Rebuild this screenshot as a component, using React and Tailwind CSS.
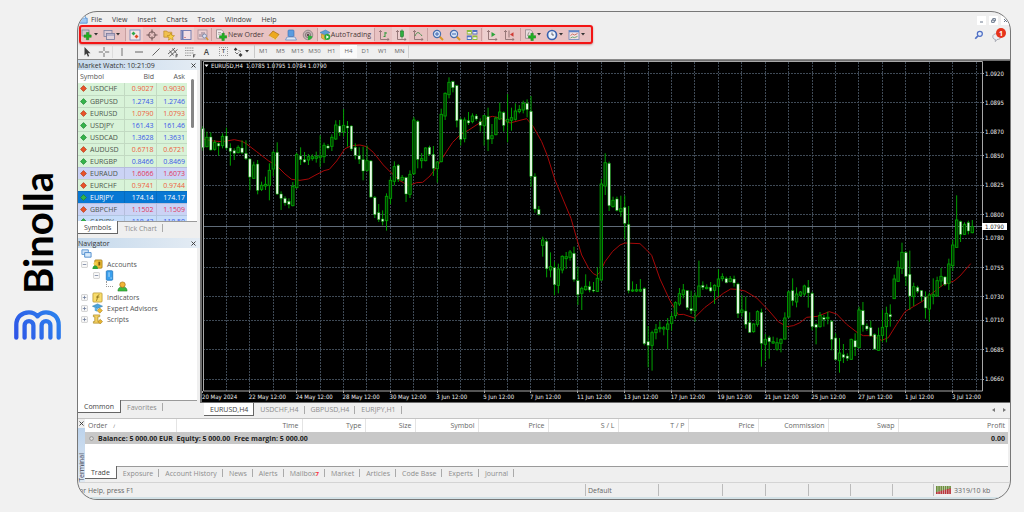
import React from 'react';
import clsx from 'clsx';

// ---------- Chart data ----------
// [kind, body top, body bottom, high, low] in thirds of a pixel; w = bearish, g = bullish
const CANDLES = `
w 206 263 198 272|g 232 260 215 262|w 231 270 217 272|g 247 268 240 272|w 250 258 247 287|g 229 257 220 265
w 228 264 203 270|w 264 274 250 317|w 272 280 265 300|g 262 278 256 280|w 264 278 241 282|w 280 296 241 300
w 297 351 295 391|g 315 355 305 357|w 312 391 300 403|g 376 388 365 393|g 373 378 350 390|g 331 376 310 421
g 278 327 272 348|w 277 402 247 405|w 402 415 394 450|w 415 429 409 437|w 424 433 415 445|g 379 437 366 439
g 284 383 278 385|w 288 299 262 315|w 299 306 276 309|g 290 300 282 315|g 290 296 283 302|g 290 295 275 308
g 288 292 226 321|g 256 290 248 309|w 258 264 252 268|g 232 259 223 273|g 195 237 181 240|w 198 217 180 228
g 196 215 147 230|w 198 204 183 260|w 198 267 196 273|w 262 286 250 298|w 287 298 262 312|w 299 333 260 361
g 302 331 257 335|w 303 411 300 414|w 413 464 408 474|w 458 479 432 486|w 477 484 451 496|g 409 482 400 512
g 361 415 352 433|g 320 364 304 376|w 316 358 312 366|g 352 360 345 364|w 353 402 350 426|g 343 403 331 414
g 180 341 171 345|w 184 298 180 325|g 296 302 279 325|g 264 302 262 304|w 262 283 257 287|w 283 325 258 348
g 306 326 305 368|g 163 305 146 307|g 100 168 97 180|g 67 104 52 115|w 65 83 62 97|w 77 182 74 202
w 178 238 173 257|g 180 236 172 247|w 182 189 156 195|g 168 185 160 190|w 168 177 162 182|w 185 196 175 215
g 167 197 165 257|w 170 239 143 273|g 227 236 192 252|g 174 224 170 226|g 156 177 128 180|w 158 196 154 215
g 178 186 102 247|g 173 181 143 212|g 153 178 130 182|g 148 155 135 160|g 130 150 122 160|w 130 149 118 172
w 154 349 108 380|w 350 447 340 458|w 449 463 438 466|g 540 556 530 590|w 544 626 538 652|g 620 630 577 652
w 623 674 605 706|g 627 676 611 700|g 589 630 586 640|g 590 596 576 627|g 576 592 570 602|w 580 659 560 665
w 662 704 620 735|g 685 700 680 750|g 679 689 643 692|w 680 690 664 697|w 690 693 666 697|g 655 694 622 696
g 372 660 356 662|g 308 378 280 405|w 310 437 305 453|g 421 440 410 443|w 417 451 410 454|g 446 455 407 470
w 442 490 407 538|w 493 692 438 700|g 690 693 664 696|g 689 693 672 696|g 689 693 657 696|w 686 851 682 856
w 845 856 798 922|g 818 856 812 932|g 808 818 792 838|g 802 806 784 817|g 803 807 798 826|g 792 808 774 868
g 770 790 758 812|g 728 767 724 776|g 701 732 684 738|g 690 704 672 715|w 692 743 690 750|w 746 752 692 762
g 708 752 697 785|g 678 710 602 712|w 676 682 664 690|g 682 686 673 688|w 682 693 666 697|g 676 691 673 732
g 657 679 628 710|g 650 656 640 664|w 656 668 650 670|g 656 665 648 667|w 657 669 647 680|w 672 761 668 774
g 750 757 705 770|w 753 793 710 806|w 788 817 757 819|g 792 815 790 818|g 755 793 751 800|w 757 850 746 920
g 838 853 822 903|w 833 845 827 896|g 845 849 830 852|g 848 868 833 872|g 838 850 835 877|g 774 837 757 839
g 696 771 692 773|w 692 722 655 737|g 702 726 682 742|g 696 706 693 710|g 678 702 674 708|w 682 699 660 743
w 700 800 695 811|w 794 802 790 853|g 766 800 756 803|w 773 778 765 800|g 772 776 755 793|w 784 838 780 871
w 834 899 820 901|g 879 902 834 938|w 884 892 852 909|w 888 895 880 903|g 838 898 836 900|w 842 861 820 888
g 750 863 740 865|w 752 795 726 815|w 798 807 790 813|w 803 828 782 830|w 824 867 820 870|g 827 871 803 872
g 802 826 750 846|g 760 800 740 847|w 764 770 733 800|g 657 716 644 717|g 623 664 602 666|g 577 625 548 642
w 578 649 574 678|w 643 708 572 750|g 680 710 668 738|w 682 694 677 700|w 692 710 690 724|w 711 744 694 776
g 705 747 698 785|g 704 709 655 733|g 662 708 650 710|g 649 663 624 680|w 651 673 648 678|g 612 670 596 690
g 555 617 540 633|g 480 562 406 564|w 485 523 482 546|g 493 523 487 525|w 488 513 482 523|g 500 518 480 520`
  .trim()
  .split(/[|\n]/)
  .map((row) => {
    const [kind, ...v] = row.trim().split(' ');
    const [top, bottom, high, low] = v.map((n) => Number(n) / 3);
    return { kind, top, bottom, high, low };
  });

const AVERAGE =
  '9,237 40,243 67,245 103,239 126,244 140,252 170,275 205,302 231,318 255,342 275,358 300,361 325,357 345,346 372,332 388,328 410,303 435,266 455,257 480,255 500,260 520,277 550,315 571,336 600,362 625,377 650,368 668,367 690,348 715,314 740,274 758,247 781,224 805,211 840,188 863,173 877,169 900,174 930,189 960,181 980,176 1000,200 1025,245 1042,287 1065,360 1090,420 1113,475 1130,535 1145,585 1165,623 1180,641 1190,646 1200,637 1215,605 1238,574 1260,555 1275,549 1320,551 1340,570 1355,586 1380,657 1410,722 1435,764 1450,763 1483,774 1515,742 1542,722 1570,700 1592,687 1610,688 1635,693 1670,714 1705,750 1735,785 1760,800 1780,797 1800,788 1820,772 1852,769 1888,755 1910,762 1940,793 1975,820 1990,827 2015,827 2045,841 2065,833 2090,793 2115,755 2140,740 2170,722 2200,697 2230,674 2262,663 2280,648 2312,611';

const PRICES = [
  10920, 10895, 10870, 10850, 10825, 10800, 10780, 10755, 10730, 10710, 10685,
  10660
];
const DATES = [
  '20 May 2024', '22 May 12:00', '24 May 12:00', '28 May 12:00',
  '30 May 12:00', '3 Jun 12:00', '5 Jun 12:00', '7 Jun 12:00',
  '11 Jun 12:00', '13 Jun 12:00', '17 Jun 12:00', '19 Jun 12:00',
  '21 Jun 12:00', '25 Jun 12:00', '27 Jun 12:00', '1 Jul 12:00',
  '3 Jul 12:00'
];
const priceY = (p) => 13.5 + (10920 - p) * 1.176;

const SYMBOLS = [
  ['USDCHF', '0.9027', '0.9030', 'down'],
  ['GBPUSD', '1.2743', '1.2746', 'up'],
  ['EURUSD', '1.0790', '1.0793', 'down'],
  ['USDJPY', '161.43', '161.46', 'up'],
  ['USDCAD', '1.3628', '1.3631', 'up'],
  ['AUDUSD', '0.6718', '0.6721', 'down'],
  ['EURGBP', '0.8466', '0.8469', 'up'],
  ['EURAUD', '1.6066', '1.6073', 'down', 'blue'],
  ['EURCHF', '0.9741', '0.9744', 'down'],
  ['EURJPY', '174.14', '174.17', 'up', 'selected'],
  ['GBPCHF', '1.1502', '1.1509', 'down', 'blue'],
  ['CADJPY', '118.43', '118.50', 'up', 'sky']
];

const ROW_BG = {
  green: 'bg-[#d8f3d8]',
  blue: 'bg-[#cbd3f5]',
  sky: 'bg-[#c6dcfa]',
  selected: 'bg-[#0878d4]'
};

const COLUMNS = [
  ['Time', 'w-[126px]'],
  ['Type', 'w-[63px]'],
  ['Size', 'w-[50px]'],
  ['Symbol', 'w-[63px]'],
  ['Price', 'w-[70px]'],
  ['S / L', 'w-[70px]'],
  ['T / P', 'w-[70px]'],
  ['Price', 'w-[70px]'],
  ['Commission', 'w-[70px]'],
  ['Swap', 'w-[70px]'],
  ['Profit', '']
];

// ---------- Icons ----------
const Icon = ({ children, className = 'size-3' }) => (
  <svg
    viewBox="0 0 12 12"
    className={clsx('block shrink-0', className)}
    fill="none"
    aria-hidden="true"
  >
    {children}
  </svg>
);

const Plus = ({ x = 0, y = 0 }) => (
  <path
    transform={`translate(${x} ${y})`}
    d="M2.4 0h2.4v2.4h2.4v2.4H4.8v2.4H2.4V4.8H0V2.4h2.4z"
    fill="#22b022"
    stroke="#14801a"
    strokeWidth=".5"
  />
);
const Axes = () => (
  <path d="M2.5 1.5v9H11M1 3l1.500-1.500L4 3M9.500 9l1.500 1.500-1.500 1" stroke="#8f6f70" strokeWidth=".9" />
);
const Lens = ({ minus }) => (
  <>
    <path d="m7.500 7.500 3.500 3.500" stroke="#d8962a" strokeWidth="2" />
    <circle cx="5" cy="5" r="3.600" fill="#d6e4f8" stroke="#4a6fae" strokeWidth="1.200" />
    <path d={minus ? 'M3 5h4' : 'M3 5h4M5 3v4'} stroke="#3f66b0" strokeWidth="1" />
  </>
);

const ICONS = {
  newChart: (
    <>
      <rect x="1" y="1" width="7" height="6" fill="#d3c6cb" stroke="#6d7c93" strokeWidth=".7" />
      <Plus x={3} y={3.5} />
    </>
  ),
  profiles: (
    <>
      <rect x="1" y="1.500" width="8" height="6" fill="#dcc8d2" stroke="#7b7fa0" strokeWidth=".8" />
      <rect x="3.500" y="4.500" width="8" height="6" fill="#e3d0d8" stroke="#74789c" strokeWidth=".8" />
      <path d="M4 6h7" stroke="#8a90bc" />
    </>
  ),
  market: (
    <>
      <rect x="1" y="1" width="10" height="10" fill="#f4e6e8" stroke="#7d8fc0" strokeWidth=".9" />
      <path d="m4.500 2.500 2 2-2 2-2-2z" fill="#2ca84a" />
      <path d="m7.500 5.500 2 2-2 2-2-2z" fill="#e04a20" />
    </>
  ),
  target: (
    <>
      <circle cx="6" cy="6" r="3.300" stroke="#75595a" strokeWidth="1" />
      <path d="M6 .5v4M6 7.500v4M.5 6h4M7.500 6h4" stroke="#75595a" strokeWidth="1.100" />
    </>
  ),
  navigator: (
    <>
      <path d="M.8 2h3l1 1.200h4v5h-8z" fill="#f0c050" stroke="#b58020" strokeWidth=".6" />
      <path d="m7.800 4 1.100 2.400 2.600.3-1.900 1.800.5 2.600-2.300-1.300-2.300 1.300.5-2.600-1.900-1.800 2.600-.3z" fill="#f6cf45" stroke="#b98518" strokeWidth=".6" />
    </>
  ),
  terminal: (
    <>
      <rect x="1" y="1.500" width="10" height="9" fill="#f2dfe4" stroke="#6b78b0" strokeWidth=".9" />
      <path d="M1.500 2h2v8h-2z" fill="#6b78b0" />
      <path d="M4.500 8.500h1" stroke="#c03030" />
    </>
  ),
  tester: (
    <>
      <rect x="1" y="1" width="9" height="9" fill="#ecd0d2" stroke="#a98f98" strokeWidth=".8" />
      <path d="M3 8V5M5 8V3M7 6V3" stroke="#8d7c90" />
      <circle cx="7.500" cy="7" r="2" fill="#d8e0f2" stroke="#7580a0" strokeWidth=".8" />
      <path d="m9 8.500 2.200 2.500" stroke="#d49430" strokeWidth="1.400" />
    </>
  ),
  order: (
    <>
      <path d="M1.500.8h5l2 2v6.500h-7z" fill="#f1ecec" stroke="#8a7a7c" strokeWidth=".7" />
      <path d="M3 3.500h3M3 5.200h3" stroke="#a09092" strokeWidth=".7" />
      <Plus x={4.5} y={4.3} />
    </>
  ),
  editor: (
    <>
      <path d="M1 6.500 5 2l6 3.500-3.500 5z" fill="#eda91f" stroke="#a86a10" strokeWidth=".7" />
      <path d="m1.200 7 6.300 3.700L11 6.400" stroke="#fbe3a0" strokeWidth=".8" />
    </>
  ),
  community: (
    <>
      <path d="M2 8h8l1.500 3h-11z" fill="#dfe6f2" stroke="#5f86c4" strokeWidth=".7" />
      <rect x="3" y="1" width="6" height="6.500" rx="1" fill="#5a9be0" stroke="#3a6bb0" strokeWidth=".6" />
    </>
  ),
  signals: (
    <>
      <circle cx="6" cy="6" r="4.800" fill="#c4b2b4" stroke="#8f8082" strokeWidth=".8" />
      <circle cx="6" cy="6" r="2.600" stroke="#7b6b6e" strokeWidth=".8" />
      <path d="M6 6v5c2 0 4-1.500 4.500-3.500z" fill="#2eae3c" />
      <circle cx="6" cy="6" r="1.200" fill="#5d4d50" />
    </>
  ),
  auto: (
    <>
      <path d="M1 3.500 6.500 1 11 3.500 6 6z" fill="#5f9fd6" stroke="#3a70a8" strokeWidth=".5" />
      <path d="M2.500 5v4L6 11l3-1.500V5L6 6.500z" fill="#e9b640" stroke="#a77818" strokeWidth=".5" />
      <circle cx="8.300" cy="8" r="3" fill="#27a838" />
      <path d="m7.300 6.300 2.700 1.700-2.700 1.700z" fill="#fff" />
    </>
  ),
  bars: (
    <>
      <Axes />
      <path d="M7 3v5M7 4h2M5.500 7.500H7" stroke="#2e9a3a" strokeWidth="1" />
    </>
  ),
  candles: (
    <>
      <Axes />
      <path d="M7 .5v9" stroke="#1d7d2b" strokeWidth=".8" />
      <rect x="5.500" y="2" width="3" height="5.500" fill="#2fae3e" stroke="#1d7d2b" strokeWidth=".6" />
    </>
  ),
  line: (
    <>
      <Axes />
      <path d="M3 7c2-5 4-4 7 0" stroke="#3d8a45" strokeWidth=".9" />
    </>
  ),
  zoomIn: <Lens />,
  zoomOut: <Lens minus />,
  tile: (
    <>
      <path d="M.8 1h5v4.600h-5zM6.400 6.400h5V11h-5z" fill="#8dbb3a" />
      <path d="M6.400 1h5v4.600h-5zM.8 6.400h5V11h-5z" fill="#4d6fc0" />
      <path d="M1.600 3h3.400v1.600H1.600zM7.200 3h3.400v1.600H7.200zM1.600 8.300h3.400v1.600H1.600zM7.200 8.300h3.400v1.600H7.200z" fill="#f1eef2" />
    </>
  ),
  scroll: (
    <>
      <Axes />
      <path d="m5.500 3 4 2.500-4 2.500z" fill="#2fa53c" />
    </>
  ),
  shift: (
    <>
      <Axes />
      <path d="M6 1.500v7" stroke="#7d5f60" strokeWidth=".8" />
      <path d="m10.500 3.200-3.500 2.300 3.500 2.300z" fill="#d03a34" />
    </>
  ),
  indicators: (
    <>
      <path d="M1.500.8h5l2 2v6.500h-7z" fill="#e9dcde" stroke="#8a7a7c" strokeWidth=".7" />
      <path d="M3.200 7c1 0 .8-4 2.300-4" stroke="#776" strokeWidth=".7" />
      <Plus x={4.5} y={4.3} />
    </>
  ),
  clock: (
    <>
      <circle cx="6" cy="6" r="4.500" fill="#eef3fb" stroke="#3b62ae" strokeWidth="1.700" />
      <path d="M6 3.500V6h2" stroke="#445" strokeWidth=".8" />
    </>
  ),
  template: (
    <>
      <rect x="1" y="1.500" width="10" height="9" fill="#f1dfe1" stroke="#6b86bd" strokeWidth=".8" />
      <path d="M1 2.500h10" stroke="#5c82c8" strokeWidth="1.600" />
      <path d="m2.500 6.500 2-1.500 2 1 3-1.500" stroke="#c25a4a" strokeWidth=".8" />
      <path d="m2.500 9 2-1 2 .6 3-1.200" stroke="#4d9a58" strokeWidth=".8" />
    </>
  ),
  cursor: <path d="M3.500 1v8.500l2-2 1.400 3.200 1.300-.6L6.900 7.200h2.600z" fill="#3c3c3c" />,
  cross: <path d="M6 1v4M6 7v4M.8 6h4.200M7 6h4.200" stroke="#666" strokeWidth=".9" />,
  vline: <path d="M6 2v8" stroke="#666" strokeWidth=".9" />,
  hline: <path d="M2 6h8" stroke="#555" strokeWidth=".9" />,
  trend: <path d="m2.500 9.500 7-7" stroke="#555" strokeWidth=".9" />,
  channel: (
    <>
      <path d="m1 8 7-6M2.500 10.500l8-7M2.500 4.500l4 5M5.500 2.500l4 5" stroke="#555" strokeWidth=".9" />
      <path d="M9 8.500v3M9 8.700h2M9 10h1.600" stroke="#333" strokeWidth=".7" />
    </>
  ),
  fibo: (
    <>
      <path d="M1 2h9M1 4.500h9M1 7h9M1 9.500h6" stroke="#888" strokeWidth=".8" strokeDasharray="1.200 .5" />
      <path d="M9.500 8.500v3M9.500 8.700h2M9.500 10h1.500" stroke="#333" strokeWidth=".7" />
    </>
  ),
  shapes: (
    <>
      <path d="m3.500 1.500 2 2-2 1.500-1.700-1.500z" fill="#3b3b3b" />
      <path d="m8.500 7 2 2-2 2-2-2z" fill="#3b3b3b" />
      <path d="m3 6 2 2 1.500-1.500M6.500 4.500 9 5.500" stroke="#555" strokeWidth=".8" />
    </>
  )
};

const ToolButton = ({ name, menu, pressed }) => (
  <button
    type="button"
    aria-label={name}
    className={clsx(
      'flex h-[15px] items-center',
      menu ? 'w-[22px] gap-px' : 'w-[17px] justify-center',
      pressed && 'bg-white/20'
    )}
  >
    <Icon>{ICONS[name]}</Icon>
    {menu && <Caret />}
  </button>
);

const Caret = () => (
  <svg viewBox="0 0 4 3" className="block h-[3px] w-[4px] shrink-0" aria-hidden="true">
    <path d="M0 0h4L2 2.500z" fill="#333" />
  </svg>
);

const Divider = ({ className = 'bg-[#c89fa0]' }) => (
  <span className={clsx('h-[13px] w-px shrink-0', className)} />
);

const CloseMark = () => (
  <svg viewBox="0 0 5 5" className="block size-[5px]" aria-hidden="true">
    <path d="m.5.5 4 4m0-4-4 4" stroke="#333" strokeWidth=".9" />
  </svg>
);

// ---------- Top area ----------
const MenuBar = () => (
  <div className="flex h-[14px] items-center justify-between">
    <nav className="flex items-center gap-[10px]">
      <Icon className="-mr-[7px] size-[10px]">
        <path d="M1 5h10v6H1z" fill="#9fc8f2" stroke="#4d8bd0" />
        <path d="M3 5V2l3-1.500L9 3v2" fill="#d4e8fb" stroke="#5d97d6" />
      </Icon>
      {['File', 'View', 'Insert', 'Charts', 'Tools', 'Window', 'Help'].map((m) => (
        <button key={m} type="button" className="text-[#3c3c3c]">
          {m}
        </button>
      ))}
    </nav>
    <div className="flex gap-[3px] pt-[2px]">
      {[
        ['Minimize', 'M4 8h4'],
        ['Restore', 'M3.500 5.500h3.500v3H3.500zM5 5.500v-2h3.500v3H7'],
        ['Close', 'm4 4 4 4m0-4-4 4']
      ].map(([label, d]) => (
        <button key={label} type="button" aria-label={label} className="bg-white">
          <Icon className="size-[9px]">
            <path d={d} stroke="#5a6a80" strokeWidth="1.200" />
          </Icon>
        </button>
      ))}
    </div>
  </div>
);

const MainToolbar = () => (
  <div className="flex items-center justify-between pr-1">
    <div className="-mt-px ml-px flex h-[19px] items-center rounded-[3px] border-2 border-[#f31414] bg-[#e8c2c2] pr-px shadow-[0_1px_2px_rgba(160,60,60,0.5)]">
      <ToolButton name="newChart" menu />
      <ToolButton name="profiles" menu />
      <Divider />
      <ToolButton name="market" pressed />
      <ToolButton name="target" />
      <ToolButton name="navigator" pressed />
      <ToolButton name="terminal" pressed />
      <ToolButton name="tester" />
      <Divider />
      <button type="button" className="flex items-center gap-px pl-[3px] pr-[2px] text-[#4a3838]">
        <Icon>{ICONS.order}</Icon>
        New Order
      </button>
      <ToolButton name="editor" />
      <ToolButton name="community" />
      <ToolButton name="signals" />
      <Divider />
      <button type="button" className="flex h-[15px] items-center bg-white/20 pl-px pr-[3px] text-[#4a3838]">
        <Icon>{ICONS.auto}</Icon>
        AutoTrading
      </button>
      <Divider />
      <ToolButton name="bars" />
      <ToolButton name="candles" pressed />
      <ToolButton name="line" />
      <Divider className="mx-px bg-[#c89fa0]" />
      <ToolButton name="zoomIn" />
      <ToolButton name="zoomOut" />
      <ToolButton name="tile" />
      <Divider className="mx-px bg-[#c89fa0]" />
      <ToolButton name="scroll" pressed />
      <ToolButton name="shift" />
      <Divider className="mx-[3px] bg-[#c89fa0]" />
      <ToolButton name="indicators" menu />
      <ToolButton name="clock" menu />
      <ToolButton name="template" menu />
    </div>
    <div className="flex items-center gap-2">
      <button type="button" aria-label="Search">
        <Icon className="size-[10px]">
          <circle cx="7" cy="4.500" r="3" fill="#e6eefc" stroke="#4f6fc4" strokeWidth="1.500" />
          <path d="M4.700 7 1.500 10.500" stroke="#4f6fc4" strokeWidth="2" />
        </Icon>
      </button>
      <button type="button" className="relative h-[14px] w-[14px]" aria-label="Notifications">
        <Icon className="mt-1 size-[10px]">
          <path d="M1 5.500C1 3 3 2 6 2s5 1.500 5 3.500S9 9 6 9l-2 2.500V9C2 8.500 1 7.500 1 5.500z" fill="#eceef2" stroke="#9a9ea8" />
        </Icon>
        <span className="absolute right-0 top-0 flex size-[10px] items-center justify-center rounded-full bg-[#e5321b] font-bold text-white">
          1
        </span>
      </button>
    </div>
  </div>
);

const DrawingToolbar = () => (
  <div className="flex h-[15px] items-center text-[6px] text-[#666]">
    <ToolButton name="cursor" />
    <ToolButton name="cross" />
    <Divider className="bg-[#dcdcdc]" />
    <ToolButton name="vline" />
    <ToolButton name="hline" />
    <ToolButton name="trend" />
    <ToolButton name="channel" />
    <ToolButton name="fibo" />
    <button type="button" className="w-[17px] text-[8px] font-semibold text-[#444]">
      A
    </button>
    <button type="button" className="flex w-[17px] justify-center">
      <span className="border border-dotted border-[#999] px-[2px] font-semibold leading-[7px] text-[#444]">
        T
      </span>
    </button>
    <ToolButton name="shapes" menu />
    <Divider className="bg-[#c9c9c9]" />
    {['M1', 'M5', 'M15', 'M30', 'H1', 'H4', 'D1', 'W1', 'MN'].map((t) => (
      <button
        key={t}
        type="button"
        className={clsx('h-[13px] w-[17px]', t === 'H4' && 'bg-[#fafafa]')}
      >
        {t}
      </button>
    ))}
    <Divider className="bg-[#d0d0d0]" />
  </div>
);

// ---------- Left side ----------
const PanelTitle = ({ children }) => (
  <div className="flex h-[10px] items-center justify-between bg-linear-to-r from-[#c5d9ec] to-[#e4ecf4] pr-1 text-[#333]">
    <h2>{children}</h2>
    <button type="button" aria-label="Close panel">
      <CloseMark />
    </button>
  </div>
);

const Tabs = ({ items, label }) => (
  <div role="tablist" aria-label={label} className="flex h-[13px] text-[#8d8d8d]">
    {items.map((item, i) => (
      <button
        key={item}
        type="button"
        role="tab"
        aria-selected={i === 0}
        className={clsx(
          'flex items-center whitespace-nowrap pl-[6px]',
          i === 0
            ? 'border-b border-r border-[#666] bg-white pr-[6px] text-[#444]'
            : 'border-t border-[#9a9a9a]'
        )}
      >
        {item}
        {item === 'Mailbox' && (
          <span className="self-end text-[6px] font-bold leading-[9px] text-red-500">7</span>
        )}
        {i > 0 && <span className="ml-[5px] h-2 w-px bg-[#aaa]" />}
      </button>
    ))}
    <span className="flex-1 border-t border-[#9a9a9a]" />
  </div>
);

const MarketWatch = () => (
  <section>
    <PanelTitle>Market Watch: 10:21:09</PanelTitle>
    <div className="mr-[3px] flex h-[151px] overflow-hidden bg-white">
      <table className="h-[158px] w-[109px] table-fixed border-collapse">
        <thead>
          <tr className="h-[13px] text-[#555]">
            <th className="w-[46px] pl-[2px] text-left font-normal">Symbol</th>
            <th className="w-[32px] pr-[2px] text-right font-normal">Bid</th>
            <th className="pr-[2px] text-right font-normal">Ask</th>
          </tr>
        </thead>
        <tbody>
          {SYMBOLS.map(([symbol, bid, ask, dir, tone = 'green']) => {
            const priceColor =
              tone === 'selected'
                ? 'text-white'
                : dir === 'up'
                  ? 'text-[#3858e8]'
                  : tone === 'blue'
                    ? 'text-[#e0355c]'
                    : 'text-[#ee6040]';
            return (
              <tr key={symbol} className={clsx('h-3 border-b border-black/10', ROW_BG[tone])}>
                <td className="pl-[2px]">
                  <span
                    className={clsx(
                      'flex items-center gap-[3px]',
                      tone === 'selected' ? 'text-white' : 'text-[#4c564c]'
                    )}
                  >
                    <Icon className="size-[7px]">
                      <path
                        d="m6 1 5 5-5 5-5-5z"
                        fill={dir === 'up' ? '#35b44a' : '#e8532a'}
                        stroke={dir === 'up' ? '#1b7f30' : '#b03a1a'}
                        strokeWidth="1.200"
                      />
                    </Icon>
                    {symbol}
                  </span>
                </td>
                <td className={clsx('border-x border-black/10 pr-[2px] text-right', priceColor)}>{bid}</td>
                <td className={clsx('pr-[2px] text-right', priceColor)}>{ask}</td>
              </tr>
            );
          })}
        </tbody>
      </table>
      <span className="ml-1 mt-[9px] h-[49px] w-[3px] rounded-full bg-[#858585]" />
    </div>
    <div className="mr-[3px]">
      <Tabs label="Market watch" items={['Symbols', 'Tick Chart']} />
    </div>
  </section>
);

const Expander = ({ open }) => (
  <Icon className="size-[7px]">
    <rect x="1" y="1" width="10" height="10" rx="1" fill="#fafafa" stroke="#b4b4b4" />
    <path d={open ? 'M3 6h6' : 'M3 6h6M6 3v6'} stroke="#6b7a98" strokeWidth="1.300" />
  </Icon>
);

const TREE = [
  {
    label: 'Accounts',
    open: true,
    icon: (
      <>
        <rect x="3" y="1" width="8" height="9" rx="1" fill="#edbd35" stroke="#9c7412" strokeWidth=".8" />
        <path d="M7 3h2v4H7z" fill="#7a5a10" />
        <circle cx="3.500" cy="5" r="1.800" fill="#f4cf50" />
        <path d="M.5 11c0-3 1.500-4 3-4s3 1 3 4z" fill="#2da338" />
      </>
    )
  },
  {
    pad: 'pl-[12px]',
    open: true,
    icon: (
      <>
        <rect x="2.500" y=".8" width="7" height="10.400" rx="1" fill="#3aa0ee" stroke="#1c6fb8" strokeWidth=".8" />
        <path d="M5.500 2.500v5M7 8.800h1.500" stroke="#bfe2fd" />
      </>
    )
  },
  {
    pad: 'pl-[25px]',
    leaf: true,
    icon: (
      <>
        <path d="M1 11c0-3.500 2-4.500 5-4.500s5 1 5 4.500z" fill="#3dbb3f" stroke="#1f7e28" strokeWidth=".6" />
        <circle cx="6" cy="4" r="3" fill="#f1b537" stroke="#a06c14" strokeWidth=".7" />
      </>
    )
  },
  {
    label: 'Indicators',
    icon: (
      <>
        <rect x="1" y="1" width="10" height="10" rx="1" fill="#f8dc6c" stroke="#b8952c" strokeWidth=".8" />
        <path d="M4.500 9.500c1.500 0 1-7 3.500-6.500M4.500 5.500h3.500" stroke="#7a6010" strokeWidth=".9" />
      </>
    )
  },
  {
    label: 'Expert Advisors',
    icon: (
      <>
        <path d="M.5 3.500 6 1l5.500 2.500L6 6z" fill="#4ba3da" stroke="#2b77a8" strokeWidth=".6" />
        <path d="M3 5v3.500L6 9.500V6z" fill="#5db0e2" />
        <path d="m8.500 5.500 2.800 2.800-2.800 2.800-2.800-2.800z" fill="#edbb38" stroke="#a07a18" strokeWidth=".6" />
      </>
    )
  },
  {
    label: 'Scripts',
    icon: (
      <>
        <path d="M1.500 1h7v2H6.500v5h2v2h-7V8.200H3V3H1.500z" fill="#f3cf60" stroke="#a5831e" strokeWidth=".7" />
        <path d="m9 5.800 2.500 2.500L9 10.800 6.500 8.300z" fill="#e8b432" stroke="#a07a18" strokeWidth=".6" />
      </>
    )
  }
];

const Navigator = () => (
  <section className="mt-1 flex flex-1 flex-col">
    <PanelTitle>Navigator</PanelTitle>
    <div className="mr-[3px] flex-1 bg-white px-[3px]">
      <Icon className="size-[11px]">
        <path d="M1 2h7v5H1z" fill="#cfe3f8" stroke="#5c97d2" />
        <path d="M4 5h7v5H4z" fill="#d9ebfb" stroke="#4a89cc" />
      </Icon>
      <ul className="text-[#555]">
        {TREE.map((node, i) => (
          <li key={i} className={clsx('flex h-[11px] items-center gap-1', node.pad)}>
            {node.leaf ? (
              <span className="h-[6px] w-[7px] self-start border-b border-l border-dotted border-[#999]" />
            ) : (
              <Expander open={node.open} />
            )}
            <Icon className="size-[11px]">{node.icon}</Icon>
            {node.label}
          </li>
        ))}
      </ul>
    </div>
    <div className="mr-[3px]">
      <Tabs label="Navigator" items={['Common', 'Favorites']} />
    </div>
  </section>
);

// ---------- Chart ----------
const Chart = () => (
  <svg
    viewBox="0 0 810 343"
    className="block h-auto w-full font-['DejaVu_Sans_Condensed','DejaVu_Sans',sans-serif] text-[6px]"
    role="img"
    aria-label="EURUSD,H4"
  >
    <rect width="810" height="343" fill="#6e6e6e" />
    <rect x="2" y="1" width="808" height="341" fill="#000" />
    <g stroke="#3f4a56" strokeWidth="1" strokeDasharray="2 1">
      {Array.from({ length: 33 }, (_, i) => {
        const x = Math.floor(26.3 + i * 23.43) + 0.5;
        return <line key={i} x1={x} x2={x} y1="2" y2="331" />;
      })}
      {PRICES.map((p) => {
        const y = Math.floor(priceY(p)) + 0.5;
        return <line key={p} x1="3" x2="782" y1={y} y2={y} />;
      })}
    </g>
    <line x1="3" x2="782" y1="166.5" y2="166.5" stroke="#5f6b78" />
    <polyline
      points={AVERAGE}
      transform="scale(.33333)"
      fill="none"
      stroke="#a80808"
      strokeWidth="3"
    />
    <g stroke="#00a000" strokeWidth="1">
      {CANDLES.map((c, i) => {
        const x = 3 + i * 3.905;
        return (
          <g key={i}>
            <line x1={x} x2={x} y1={c.high} y2={c.low} />
            <rect
              x={x - 1.2}
              y={c.top}
              width="2.400"
              height={Math.max(c.bottom - c.top, 0.8)}
              fill={c.kind === 'w' ? '#e8fbe8' : '#003800'}
              strokeWidth={c.kind === 'w' ? 0.5 : 0.9}
            />
          </g>
        );
      })}
    </g>
    <path d="M3.500 1.500h779v329.500H3.500z" fill="none" stroke="#a8a8a8" />
    <path d="M4.500 4.500h4l-2 2.500z" fill="#fff" />
    <g fill="#f0f0f0">
      <text x="11" y="8">EURUSD,H4</text>
      <text x="46" y="8">1.0785 1.0795 1.0784 1.0790</text>
      {DATES.map((d, i) => (
        <text key={d} x={2 + i * 46.87} y="339">
          {d}
        </text>
      ))}
      {PRICES.map((p) => (
        <text key={p} x="785" y={priceY(p) + 2}>
          {(p / 10000).toFixed(4)}
        </text>
      ))}
    </g>
    <g stroke="#a8a8a8">
      {PRICES.map((p) => (
        <line key={p} x1="782" x2="784" y1={Math.floor(priceY(p)) + 0.5} y2={Math.floor(priceY(p)) + 0.5} />
      ))}
      {DATES.map((d, i) => (
        <line key={d} x1={Math.floor(2.9 + i * 46.86) + 0.5} x2={Math.floor(2.9 + i * 46.86) + 0.5} y1="331" y2="333" />
      ))}
    </g>
    <rect x="782" y="163" width="25" height="7" fill="#fff" />
    <text x="785" y="168.6" fill="#222">1.0790</text>
  </svg>
);

const ChartTabs = () => (
  <div className="flex items-start justify-between pr-1 text-[#8d8d8d]">
    <div role="tablist" aria-label="Charts" className="flex h-[13px] pl-1">
      {['EURUSD,H4', 'USDCHF,H4', 'GBPUSD,H4', 'EURJPY,H1'].map((t, i) => (
        <button
          key={t}
          type="button"
          role="tab"
          aria-selected={i === 0}
          className={clsx(
            'flex items-center pl-[6px]',
            i === 0 && 'border-b border-r border-[#666] bg-white pr-[5px] text-[#444]'
          )}
        >
          {t}
          {i > 0 && <span className="ml-[5px] h-2 w-px bg-[#aaa]" />}
        </button>
      ))}
    </div>
    <div className="flex h-[13px] items-center gap-2">
      <button type="button" aria-label="Previous">
        <svg viewBox="0 0 3 4" className="h-1 w-[3px]"><path d="M3 0v4L0 2z" fill="#777" /></svg>
      </button>
      <button type="button" aria-label="Next">
        <svg viewBox="0 0 3 4" className="h-1 w-[3px]"><path d="M0 0v4l3-2z" fill="#777" /></svg>
      </button>
    </div>
  </div>
);

// ---------- Bottom ----------
const Terminal = () => (
  <section className="flex border-t border-[#c4c4c4] pr-[2px]">
    <div className="flex w-[7px] flex-col items-center">
      <button type="button" aria-label="Close terminal" className="py-[2px]">
        <CloseMark />
      </button>
      <div className="flex w-full flex-1 items-end justify-center overflow-hidden bg-linear-to-b from-[#bcd3ec] to-[#dfe8f2]">
        <span className="rotate-180 leading-[7px] text-[#445] [writing-mode:vertical-rl]">
          Terminal
        </span>
      </div>
    </div>
    <div className="min-w-0 flex-1">
      <div className="h-[47px] bg-white">
        <table className="w-full table-fixed border-collapse">
          <thead>
            <tr className="h-[13px] text-[#666]">
              <th className="w-[91px] pl-[3px] text-left font-normal">
                Order <span className="pl-1 text-[5px]">∕</span>
              </th>
              {COLUMNS.map(([name, width], i) => (
                <th
                  key={i}
                  className={clsx('border-l border-[#e4e4e4] pr-[3px] text-right font-normal', width)}
                >
                  {name}
                </th>
              ))}
            </tr>
          </thead>
          <tbody>
            <tr className="h-3 bg-[#c8c8c8] font-bold text-[#222]">
              <td colSpan={11} className="pl-1">
                <span className="flex items-center gap-1 whitespace-pre">
                  <Icon className="size-[5px]">
                    <circle cx="6" cy="6" r="4.500" fill="#ddd" stroke="#777" strokeWidth="1.500" />
                  </Icon>
                  {'Balance: 5 000.00 EUR  Equity: 5 000.00  Free margin: 5 000.00'}
                </span>
              </td>
              <td className="pr-[3px] text-right">0.00</td>
            </tr>
          </tbody>
        </table>
      </div>
      <Tabs
        label="Terminal"
        items={[
          'Trade', 'Exposure', 'Account History', 'News', 'Alerts', 'Mailbox',
          'Market', 'Articles', 'Code Base', 'Experts', 'Journal'
        ]}
      />
      <div className="h-[3px]" />
    </div>
  </section>
);

const StatusBar = () => (
  <footer className="flex h-[17px] items-stretch border-b-2 border-t border-b-[#d3e1e6] border-t-[#d4d4d4] py-px text-[#666]">
    <span className="flex flex-1 items-center pl-px">or Help, press F1</span>
    <span className="flex w-[73px] items-center border-l border-[#bbb] pl-[2px]">Default</span>
    <span className="w-[64px] border-l border-[#bbb]" />
    <span className="w-[43px] border-l border-[#bbb]" />
    <span className="w-[43px] border-l border-[#bbb]" />
    <span className="w-[42px] border-l border-[#bbb]" />
    <span className="w-[42px] border-l border-[#bbb]" />
    <span className="w-[41px] border-l border-[#bbb]" />
    <span className="flex w-[77px] items-center gap-[3px] border-l border-[#bbb] pl-[2px]">
      <svg viewBox="0 0 15 8" className="h-2 w-[15px]" aria-hidden="true">
        {[0, 1, 2, 3, 4, 5, 6].map((i) => (
          <g key={i}>
            <rect x={i * 2.2} y="0" width="1.700" height={6 - i * 0.5} fill="#6d8f3c" />
            <rect x={i * 2.2} y={6 - i * 0.6} width="1.700" height={2 + i * 0.6} fill="#b8343a" />
          </g>
        ))}
      </svg>
      3319/10 kb
    </span>
  </footer>
);

const Brand = () => (
  <aside className="flex w-[77px] shrink-0 flex-col items-center justify-center gap-4 pr-[2px]">
    <span className="rotate-180 font-[Lato,sans-serif] text-[40px] font-bold leading-10 text-black [writing-mode:vertical-rl]">
      Binolla
    </span>
    <svg viewBox="0 0 47 30" className="h-[30px] w-[47px]" fill="none" aria-hidden="true">
      <defs>
        <linearGradient id="brand" x1="0" y1="30" x2="47" y2="0" gradientUnits="userSpaceOnUse">
          <stop stopColor="#2f52e6" />
          <stop offset="1" stopColor="#2b86ee" />
        </linearGradient>
      </defs>
      <path
        d="M2.300 27.700V15C2.300 7 8 2.300 15 2.300c3.800 0 6.300 1.300 8.500 4 2.200-2.700 4.700-4 8.500-4 7 0 12.700 4.700 12.700 12.700v12.700M10.600 27.700V15.500a4.400 4.400 0 0 1 8.800 0v12.200M27.600 27.700V15.500a4.400 4.400 0 0 1 8.800 0v12.200"
        stroke="url(#brand)"
        strokeWidth="4.300"
        strokeLinecap="round"
        strokeLinejoin="round"
      />
    </svg>
  </aside>
);

export default function App() {
  return (
    <div className="flex min-h-screen bg-[#f1f1f1] font-['Open_Sans',sans-serif] text-[7px] leading-[9px]">
      <Brand />
      <main className="mb-3 mr-[13px] mt-[11px] min-w-0 flex-1 self-start overflow-hidden rounded-[20px] border border-[#777] bg-[#efefef]">
        <MenuBar />
        <MainToolbar />
        <DrawingToolbar />
        <div className="flex border-t border-[#8a8a8a]">
          <div className="flex w-[122px] shrink-0 flex-col pb-[5px]">
            <MarketWatch />
            <Navigator />
          </div>
          <div className="min-w-0 flex-1 pb-[2px]">
            <Chart />
            <ChartTabs />
          </div>
        </div>
        <Terminal />
        <StatusBar />
      </main>
    </div>
  );
}
